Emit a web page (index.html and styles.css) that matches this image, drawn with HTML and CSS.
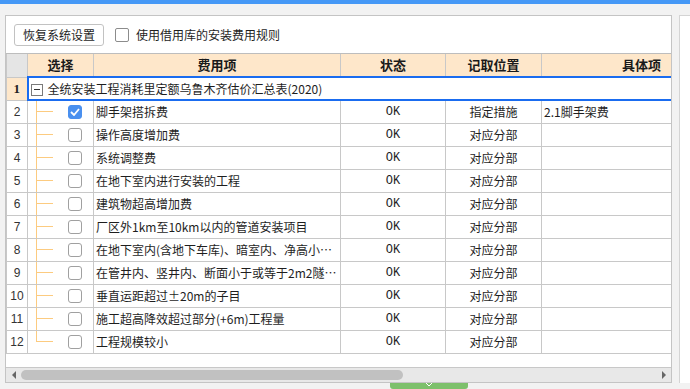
FILE: index.html
```html
<!DOCTYPE html>
<html lang="zh-CN">
<head>
  <meta charset="UTF-8" />
  <title>安装费用设置</title>
  <link rel="stylesheet" href="styles.css">
</head>
<body>
  <div class="topbar"></div>

  <div class="workspace">
    <div class="panel">
      <div class="toolbar">
        <button class="btn">恢复系统设置</button>
        <label class="opt"><span class="box"></span>使用借用库的安装费用规则</label>
      </div>

      <div class="grid">
        <table>
          <colgroup>
            <col class="c-rn">
            <col class="c-pick">
            <col class="c-name">
            <col class="c-st">
            <col class="c-pos">
            <col class="c-item">
          </colgroup>
          <thead>
            <tr>
              <th class="rn"></th>
              <th>选择</th>
              <th>费用项</th>
              <th>状态</th>
              <th>记取位置</th>
              <th>具体项</th>
            </tr>
          </thead>
          <tbody>
            <tr class="group">
              <td class="rn">1</td>
              <td class="group-cell" colspan="5"><span class="fold"></span>全统安装工程消耗里定额乌鲁木齐估价汇总表(2020)</td>
            </tr>
            <tr>
              <td class="rn">2</td>
              <td class="pick"><span class="cb on"><svg width="10" height="8" viewBox="0 0 10 8"><polyline points="1,4 4,7 9,1" fill="none" stroke="#fff" stroke-width="1.8"/></svg></span></td>
              <td class="name">脚手架搭拆费</td>
              <td class="st">OK</td>
              <td class="pos">指定措施</td>
              <td class="item">2.1脚手架费</td>
            </tr>
            <tr>
              <td class="rn">3</td>
              <td class="pick"><span class="cb"></span></td>
              <td class="name">操作高度增加费</td>
              <td class="st">OK</td>
              <td class="pos">对应分部</td>
              <td class="item"></td>
            </tr>
            <tr>
              <td class="rn">4</td>
              <td class="pick"><span class="cb"></span></td>
              <td class="name">系统调整费</td>
              <td class="st">OK</td>
              <td class="pos">对应分部</td>
              <td class="item"></td>
            </tr>
            <tr>
              <td class="rn">5</td>
              <td class="pick"><span class="cb"></span></td>
              <td class="name">在地下室内进行安装的工程</td>
              <td class="st">OK</td>
              <td class="pos">对应分部</td>
              <td class="item"></td>
            </tr>
            <tr>
              <td class="rn">6</td>
              <td class="pick"><span class="cb"></span></td>
              <td class="name">建筑物超高增加费</td>
              <td class="st">OK</td>
              <td class="pos">对应分部</td>
              <td class="item"></td>
            </tr>
            <tr>
              <td class="rn">7</td>
              <td class="pick"><span class="cb"></span></td>
              <td class="name">厂区外1km至10km以内的管道安装项目</td>
              <td class="st">OK</td>
              <td class="pos">对应分部</td>
              <td class="item"></td>
            </tr>
            <tr>
              <td class="rn">8</td>
              <td class="pick"><span class="cb"></span></td>
              <td class="name">在地下室内(含地下车库)、暗室内、净高小…</td>
              <td class="st">OK</td>
              <td class="pos">对应分部</td>
              <td class="item"></td>
            </tr>
            <tr>
              <td class="rn">9</td>
              <td class="pick"><span class="cb"></span></td>
              <td class="name">在管井内、竖井内、断面小于或等于2m2隧…</td>
              <td class="st">OK</td>
              <td class="pos">对应分部</td>
              <td class="item"></td>
            </tr>
            <tr>
              <td class="rn">10</td>
              <td class="pick"><span class="cb"></span></td>
              <td class="name">垂直运距超过±20m的子目</td>
              <td class="st">OK</td>
              <td class="pos">对应分部</td>
              <td class="item"></td>
            </tr>
            <tr>
              <td class="rn">11</td>
              <td class="pick"><span class="cb"></span></td>
              <td class="name">施工超高降效超过部分(+6m)工程量</td>
              <td class="st">OK</td>
              <td class="pos">对应分部</td>
              <td class="item"></td>
            </tr>
            <tr class="last">
              <td class="rn">12</td>
              <td class="pick"><span class="cb"></span></td>
              <td class="name">工程规模较小</td>
              <td class="st">OK</td>
              <td class="pos">对应分部</td>
              <td class="item"></td>
            </tr>
          </tbody>
        </table>
      </div>

      <div class="hscroll">
        <span class="arrow-left"></span>
        <span class="thumb"></span>
        <span class="arrow-right"></span>
      </div>
    </div>

    <div class="side"></div>
  </div>

  <div class="dock">
    <span class="handle"><svg width="8" height="4" viewBox="0 0 8 4"><polyline points="1,0 4,3 7,0" fill="none" stroke="#fff" stroke-width="1"/></svg></span>
  </div>
</body>
</html>
```

FILE: styles.css
```css
:root {
  --blue: #4598f6;
  --select: #1a6cf0;
  --line: #c8c8c8;
  --head: #fee7ca;
  --tree: #fccb80;
  --text: #1e1e1e;
}

* {
  box-sizing: border-box;
}

body {
  margin: 0;
  height: 389px;
  overflow: hidden;
  background: #f2f2f2;
  font-family: "Noto Sans CJK SC", sans-serif;
  font-size: 12px;
  color: var(--text);
}

.topbar {
  height: 4px;
  background: var(--blue);
}

.workspace {
  display: flex;
  gap: 7px;
  padding: 11px 0 0 5px;
  height: 379px;
}

.panel {
  width: 667px;
  height: 368px;
  border: 1px solid #c4c4c4;
  background: #fff;
  display: flex;
  flex-direction: column;
}

.side {
  flex: 1;
  height: 368px;
  background: #fff;
  border-top: 1px solid #d4d4d4;
  border-left: 1px solid #d4d4d4;
}

/* toolbar */
.toolbar {
  height: 38px;
  flex: none;
  display: flex;
  align-items: center;
  gap: 11px;
  padding: 0 8px;
  border-bottom: 1px solid #bdbdbd;
}

.btn {
  width: 90px;
  height: 22px;
  padding: 0;
  background: #fff;
  border: 1px solid #c2c2c2;
  border-radius: 3px;
  font-family: inherit;
  font-size: 12px;
  color: var(--text);
}

.opt {
  display: flex;
  align-items: center;
  gap: 7px;
}

.box {
  width: 14px;
  height: 14px;
  border: 1px solid #8c8c8c;
  border-radius: 2px;
  background: #fff;
}

/* grid */
.grid {
  flex: 1;
  overflow: hidden;
}

table {
  border-collapse: collapse;
  table-layout: fixed;
  width: 735px;
}

.c-rn { width: 21px; }
.c-pick { width: 66px; }
.c-name { width: 247px; }
.c-st { width: 105px; }
.c-pos { width: 96px; }
.c-item { width: 200px; }

th, td {
  height: 23px;
  padding: 0 2px;
  border: 1px solid var(--line);
  line-height: 14px;
  white-space: nowrap;
  overflow: hidden;
}

th {
  background: var(--head);
  font-size: 13px;
  font-weight: bold;
  color: #1a1a1a;
  border-top: 0;
}

th.rn {
  background: #e5e5e5;
}

td.rn {
  text-align: center;
  font-family: "Liberation Sans", sans-serif;
  color: #333;
}

.group td.rn {
  background: var(--head);
  font-family: "Liberation Serif", serif;
  font-weight: bold;
  font-size: 13px;
  color: #222;
}

td.group-cell {
  border: 2px solid var(--select);
  padding-left: 2px;
}

.fold {
  display: inline-block;
  width: 12px;
  height: 12px;
  margin-right: 5px;
  vertical-align: -2px;
  border: 1px solid #7a7a7a;
  background: linear-gradient(#333, #333) center / 6px 1px no-repeat;
}

td.pick {
  padding-left: 40px;
  background:
    linear-gradient(var(--tree), var(--tree)) 8px 0 / 1px 100% no-repeat,
    linear-gradient(var(--tree), var(--tree)) 8px 50% / 17px 1px no-repeat;
}

.last td.pick {
  background:
    linear-gradient(var(--tree), var(--tree)) 8px 0 / 1px 50% no-repeat,
    linear-gradient(var(--tree), var(--tree)) 8px 50% / 17px 1px no-repeat;
}

.cb {
  display: flex;
  align-items: center;
  justify-content: center;
  width: 14px;
  height: 14px;
  border: 1px solid #a0a0a0;
  border-radius: 3px;
  background: #fff;
}

.cb.on {
  background: #4a90ef;
  border-color: #4a90ef;
}

td.name {
  text-overflow: ellipsis;
}

td.st {
  text-align: center;
  font-family: "Liberation Mono", monospace;
}

td.pos {
  text-align: center;
}

/* horizontal scrollbar */
.hscroll {
  height: 15px;
  flex: none;
  display: flex;
  align-items: center;
  padding: 0 5px 0 6px;
  background: #e8e8e8;
  border-top: 1px solid var(--line);
}

.arrow-left {
  border-right: 4px solid #666;
  border-top: 4px solid transparent;
  border-bottom: 4px solid transparent;
}

.thumb {
  width: 382px;
  height: 10px;
  margin-left: 5px;
  border-radius: 5px;
  background: #c1c1c1;
}

.arrow-right {
  margin-left: auto;
  border-left: 4px solid #666;
  border-top: 4px solid transparent;
  border-bottom: 4px solid transparent;
}

.dock {
  padding-left: 390px;
}

.handle {
  display: flex;
  justify-content: center;
  width: 78px;
  height: 6px;
  background: #7dc06b;
  border-radius: 0 0 3px 3px;
}
```
